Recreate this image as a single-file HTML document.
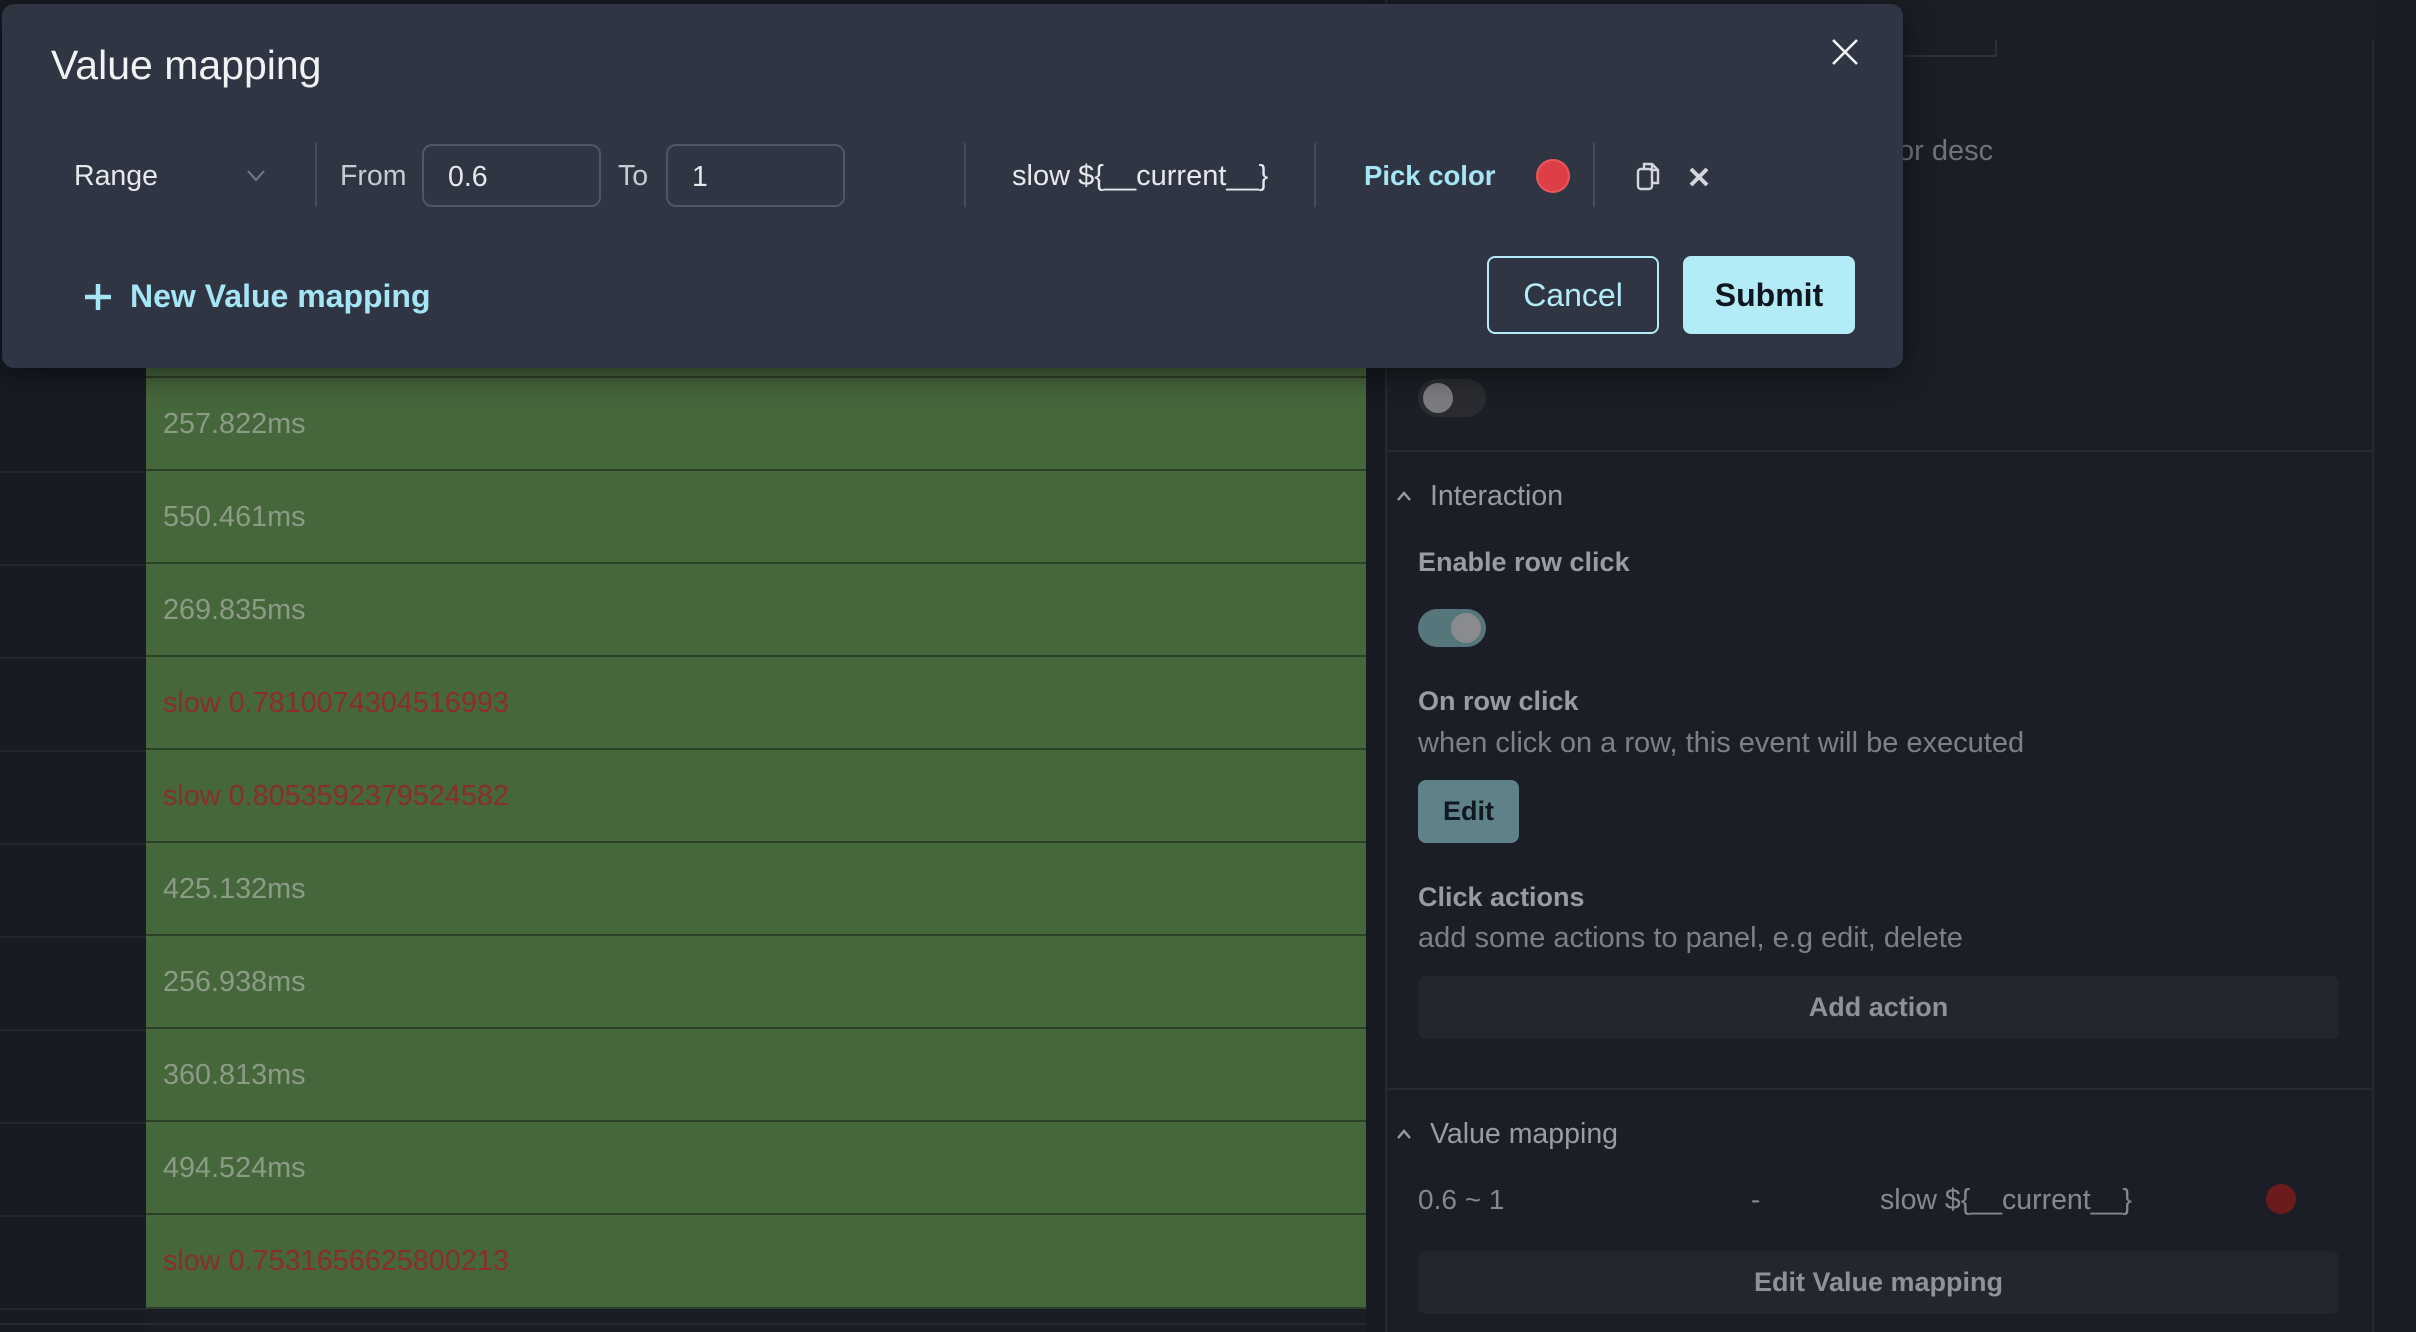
<!DOCTYPE html>
<html><head><meta charset="utf-8">
<style>
*{box-sizing:border-box;margin:0;padding:0}
body{width:2416px;height:1332px;background:#1a1d25;font-family:"Liberation Sans",sans-serif;position:relative;overflow:hidden}
.a{position:absolute;white-space:nowrap}
.row{position:absolute;left:146px;width:1220px;height:93px;background:#46663c;border-bottom:2px solid #2c3f27}
.row span{position:absolute;left:17px;top:30px;font-size:28.8px;color:#8c9b86}
.row span.r{color:#8a2f25}
.lrow{position:absolute;left:0;width:146px;height:2px;background:#22262e}
.t{color:#9a9ca2}
.btn{position:absolute;left:1418px;width:921px;height:63px;background:#22262e;border-radius:8px;color:#8f9299;font-size:27px;font-weight:bold;text-align:center;line-height:63px}
</style></head><body>
<div class="a" style="left:0;top:0;width:146px;height:1332px;background:#171b23"></div>
<div class="row" style="top:378px"><span>257.822ms</span></div>
<div class="row" style="top:471px"><span>550.461ms</span></div>
<div class="row" style="top:564px"><span>269.835ms</span></div>
<div class="row" style="top:657px"><span class="r">slow 0.7810074304516993</span></div>
<div class="row" style="top:750px"><span class="r">slow 0.8053592379524582</span></div>
<div class="row" style="top:843px"><span>425.132ms</span></div>
<div class="row" style="top:936px"><span>256.938ms</span></div>
<div class="row" style="top:1029px"><span>360.813ms</span></div>
<div class="row" style="top:1122px"><span>494.524ms</span></div>
<div class="row" style="top:1215px;height:94px"><span class="r">slow 0.7531656625800213</span></div>
<div class="row" style="top:300px;height:78px"></div>
<div class="lrow" style="top:471px"></div><div class="lrow" style="top:564px"></div><div class="lrow" style="top:657px"></div><div class="lrow" style="top:750px"></div><div class="lrow" style="top:843px"></div><div class="lrow" style="top:936px"></div><div class="lrow" style="top:1029px"></div><div class="lrow" style="top:1122px"></div><div class="lrow" style="top:1215px"></div><div class="lrow" style="top:1308px"></div>
<div class="a" style="left:0;top:1323px;width:1366px;height:2px;background:#262a32"></div>
<div class="a" style="left:1366px;top:0;width:19px;height:1332px;background:#161a21"></div>
<div class="a" style="left:1385px;top:0;width:987px;height:1332px;background:#1b1e26;border-left:2px solid #262a32"></div>
<div class="a" style="left:2372px;top:40px;width:2px;height:1292px;background:#262a32"></div>
<div class="a" style="left:1800px;top:55px;width:197px;height:2px;background:#2c3038"></div>
<div class="a" style="left:1995px;top:40px;width:2px;height:17px;background:#2c3038"></div>
<div class="a t" style="left:1898px;top:135px;font-size:29px;color:#6f737a">or desc</div>
<div class="a" style="left:1418px;top:379px;width:68px;height:38px;border-radius:19px;background:#2a2c31"></div>
<div class="a" style="left:1423px;top:383px;width:30px;height:30px;border-radius:50%;background:#7b7c80"></div>
<div class="a" style="left:1387px;top:450px;width:985px;height:2px;background:#262a32"></div>
<svg class="a" style="left:1396px;top:490px" width="16" height="12" viewBox="0 0 16 12"><path d="M2 10L8 3L14 10" stroke="#9a9ca2" stroke-width="2.4" fill="none"/></svg>
<div class="a t" style="left:1430px;top:480px;font-size:28.5px">Interaction</div>
<div class="a t" style="left:1418px;top:547px;font-size:27px;font-weight:bold">Enable row click</div>
<div class="a" style="left:1418px;top:609px;width:68px;height:38px;border-radius:19px;background:#56767b"></div>
<div class="a" style="left:1451px;top:613px;width:30px;height:30px;border-radius:50%;background:#8a8b8e"></div>
<div class="a t" style="left:1418px;top:686px;font-size:27px;font-weight:bold">On row click</div>
<div class="a t" style="left:1418px;top:727px;font-size:29px;color:#7d8087">when click on a row, this event will be executed</div>
<div class="a" style="left:1418px;top:780px;width:101px;height:63px;border-radius:8px;background:#5e8287;color:#121820;font-size:27px;font-weight:bold;text-align:center;line-height:63px">Edit</div>
<div class="a t" style="left:1418px;top:882px;font-size:27px;font-weight:bold">Click actions</div>
<div class="a t" style="left:1418px;top:922px;font-size:29px;color:#7d8087">add some actions to panel, e.g edit, delete</div>
<div class="btn" style="top:976px">Add action</div>
<div class="a" style="left:1387px;top:1088px;width:985px;height:2px;background:#262a32"></div>
<svg class="a" style="left:1396px;top:1128px" width="16" height="12" viewBox="0 0 16 12"><path d="M2 10L8 3L14 10" stroke="#9a9ca2" stroke-width="2.4" fill="none"/></svg>
<div class="a t" style="left:1430px;top:1118px;font-size:28.5px">Value mapping</div>
<div class="a t" style="left:1418px;top:1184px;font-size:28px;color:#858891">0.6 ~ 1</div>
<div class="a t" style="left:1751px;top:1184px;font-size:28px;color:#858891">-</div>
<div class="a t" style="left:1880px;top:1184px;font-size:28.5px;color:#858891">slow ${__current__}</div>
<div class="a" style="left:2266px;top:1184px;width:30px;height:30px;border-radius:50%;background:#6b1b1c"></div>
<div class="btn" style="top:1251px">Edit Value mapping</div>
<div class="a" style="left:2px;top:4px;width:1901px;height:364px;background:#2f3543;border-radius:12px;box-shadow:0 6px 30px rgba(0,0,0,.5)">
  <div class="a" style="left:49px;top:38px;font-size:41px;color:#f2f3f5">Value mapping</div>
  <svg class="a" style="left:1828px;top:33px" width="30" height="30" viewBox="0 0 30 30"><path d="M3 3L27 27M27 3L3 27" stroke="#f0f1f3" stroke-width="2.6"/></svg>
  <div class="a" style="left:72px;top:156px;font-size:28.5px;color:#e6e8ec">Range</div>
  <svg class="a" style="left:244px;top:165px" width="20" height="14" viewBox="0 0 20 14"><path d="M2 2L10 11L18 2" stroke="#767b86" stroke-width="2" fill="none"/></svg>
  <div class="a" style="left:313px;top:139px;width:2px;height:64px;background:#474c58"></div>
  <div class="a" style="left:338px;top:156px;font-size:28.5px;color:#c8cbd1">From</div>
  <div class="a" style="left:420px;top:140px;width:179px;height:63px;border:2px solid #505664;border-radius:10px;padding:15px 0 0 24px;font-size:28.5px;color:#e6e8ec">0.6</div>
  <div class="a" style="left:616px;top:156px;font-size:28.5px;color:#c8cbd1">To</div>
  <div class="a" style="left:664px;top:140px;width:179px;height:63px;border:2px solid #505664;border-radius:10px;padding:15px 0 0 24px;font-size:28.5px;color:#e6e8ec">1</div>
  <div class="a" style="left:962px;top:139px;width:2px;height:64px;background:#474c58"></div>
  <div class="a" style="left:1010px;top:156px;font-size:29px;color:#e6e8ec">slow ${__current__}</div>
  <div class="a" style="left:1312px;top:139px;width:2px;height:64px;background:#474c58"></div>
  <div class="a" style="left:1362px;top:156px;font-size:27.5px;font-weight:bold;color:#a6e6f4">Pick color</div>
  <div class="a" style="left:1534px;top:155px;width:34px;height:34px;border-radius:50%;background:#dc3f44;border:2px solid #e8585c"></div>
  <div class="a" style="left:1591px;top:139px;width:2px;height:64px;background:#474c58"></div>
  <svg class="a" style="left:1632px;top:156px" width="28" height="32" viewBox="0 0 28 32"><path d="M10 8V4h8l6 6v13h-5M18 4v6h6" stroke="#d4d6db" stroke-width="2.4" fill="none"/><rect x="4" y="9" width="14" height="20" rx="3" stroke="#d4d6db" stroke-width="2.4" fill="none"/></svg>
  <svg class="a" style="left:1686px;top:162px" width="22" height="22" viewBox="0 0 22 22"><path d="M3 3L19 19M19 3L3 19" stroke="#d4d6db" stroke-width="4"/></svg>
  <svg class="a" style="left:81px;top:278px" width="30" height="30" viewBox="0 0 30 30"><path d="M15 2V28M2 15H28" stroke="#a6e6f4" stroke-width="4.5"/></svg>
  <div class="a" style="left:128px;top:274px;font-size:32px;font-weight:bold;color:#a6e6f4">New Value mapping</div>
  <div class="a" style="left:1485px;top:252px;width:172px;height:78px;border:2px solid #b3ebf7;border-radius:8px;color:#b3ebf7;font-size:32px;text-align:center;line-height:74px">Cancel</div>
  <div class="a" style="left:1681px;top:252px;width:172px;height:78px;background:#b3ebf7;border-radius:8px;color:#10161f;font-size:32px;font-weight:bold;text-align:center;line-height:78px">Submit</div>
</div>
</body></html>
